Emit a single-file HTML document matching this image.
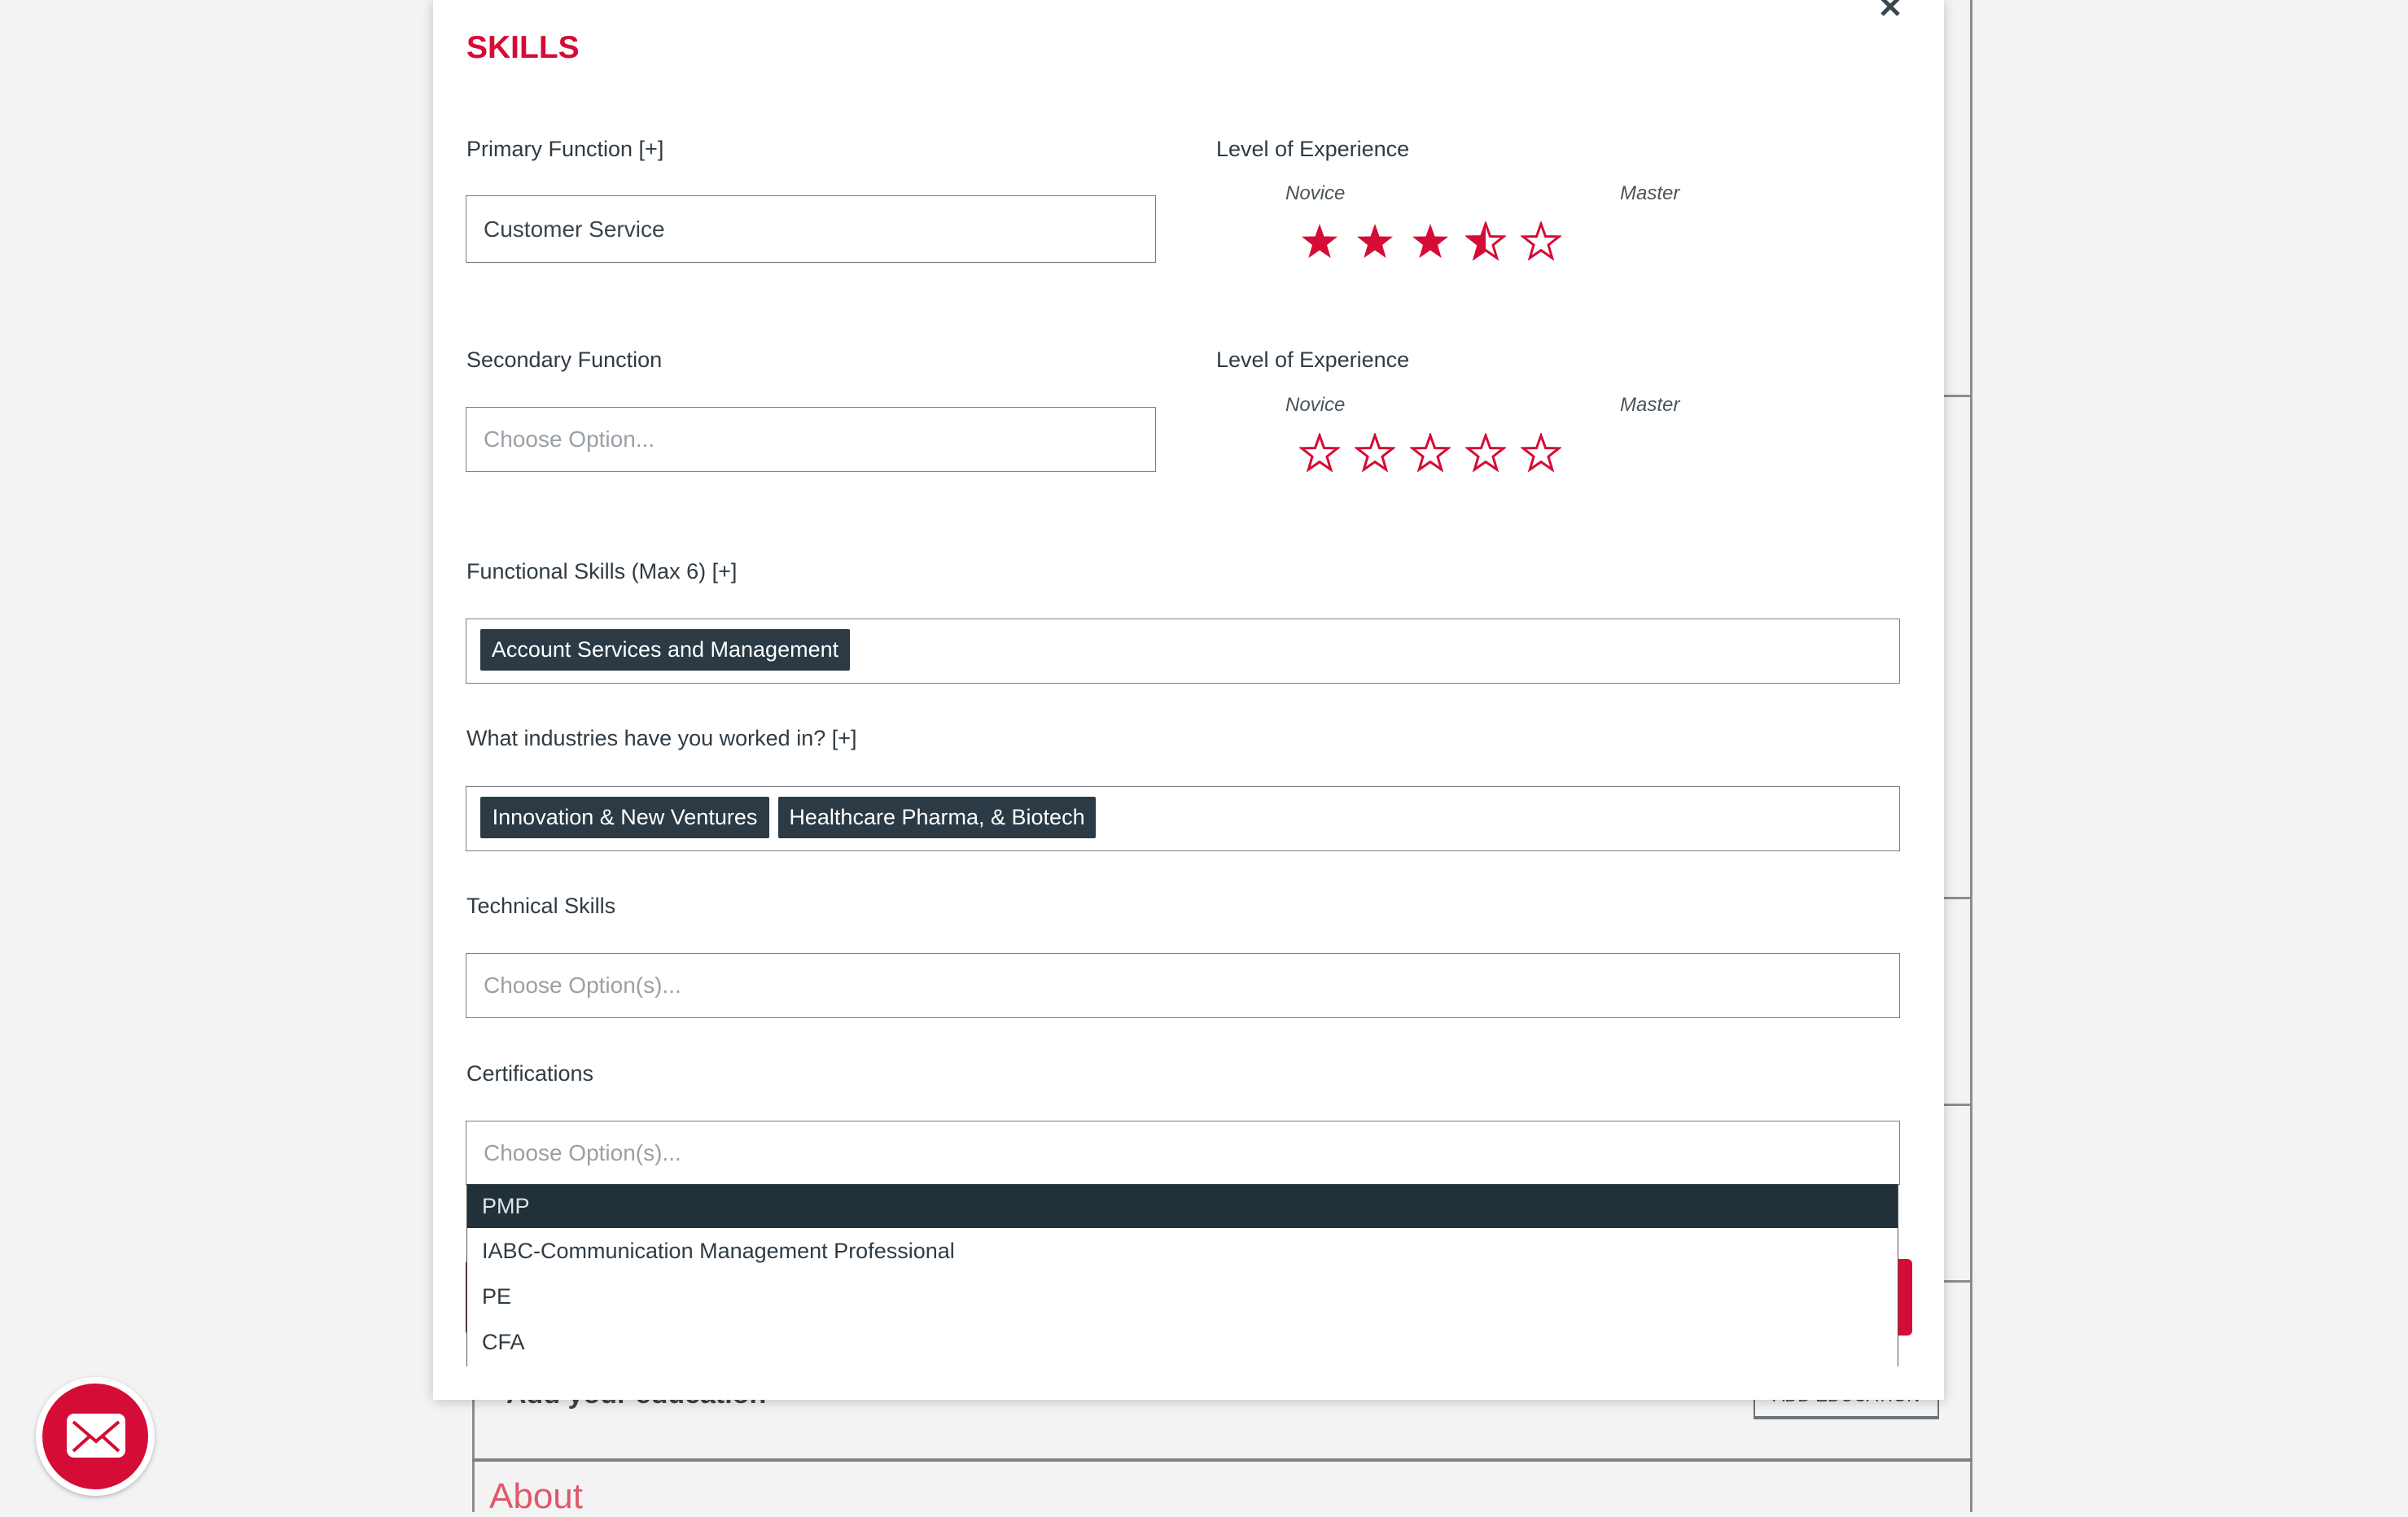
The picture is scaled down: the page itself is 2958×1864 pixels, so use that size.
<!DOCTYPE html>
<html><head><meta charset="utf-8"><style>
*{box-sizing:border-box;margin:0;padding:0}
body{width:2958px;height:1858px;background:#f3f3f3;position:relative;overflow:hidden;font-family:"Liberation Sans",sans-serif;color:#2f3b44}
.a{position:absolute}
.lbl{position:absolute;font-size:27px;color:#2f3b44;line-height:32px}
.inp{position:absolute;border:1.5px solid #7a7f84;background:#fff;font-size:28px;padding-left:21px;display:flex;align-items:center;color:#3a454d}
.ph{color:#9aa0a5}
.tag{position:absolute;background:#2b3a44;color:#fff;font-size:27px;display:flex;align-items:center;justify-content:center;border-radius:2px}
.it{position:absolute;font-style:italic;font-size:24px;color:#4a545b}
.star{position:absolute;width:50px;height:50px}
.row{position:absolute;left:0;right:0;height:56px;display:flex;align-items:center;padding-left:18px;font-size:27px;color:#2f3b44}
</style></head><body>
<div class="a" style="left:2420px;top:0;width:3px;height:1858px;background:#8a8d90"></div>
<div class="a" style="left:580px;top:1700px;width:3px;height:158px;background:#8a8d90"></div>
<div class="a" style="left:2388px;top:485px;width:34px;height:3px;background:#8a8d90"></div>
<div class="a" style="left:2388px;top:1102px;width:34px;height:3px;background:#8a8d90"></div>
<div class="a" style="left:2388px;top:1356px;width:34px;height:3px;background:#8a8d90"></div>
<div class="a" style="left:2388px;top:1573px;width:34px;height:3px;background:#8a8d90"></div>
<div class="a" style="left:580px;top:1792px;width:1843px;height:4px;background:#7e8184"></div>
<div class="a" style="left:622px;top:1694px;font-size:34px;font-weight:bold;color:#3a454d">Add your education</div>
<div class="a" style="left:2154px;top:1688px;width:228px;height:56px;border:2px solid #6c757b;border-bottom-width:4px;font-size:22px;color:#3a454d;display:flex;align-items:center;justify-content:center">ADD EDUCATION</div>
<div class="a" style="left:601px;top:1814px;font-size:44px;color:#e0586c">About</div>
<div class="a" style="left:44px;top:1692px;width:146px;height:146px;border-radius:50%;background:#fff;box-shadow:0 2px 6px rgba(0,0,0,.25)"></div>
<div class="a" style="left:52px;top:1700px;width:130px;height:130px;border-radius:50%;background:#d50c36"></div>
<svg class="a" style="left:80px;top:1735px" width="76" height="58" viewBox="0 0 76 58"><rect x="2" y="2" width="72" height="54" rx="9" fill="#fff"/><path d="M10 12 L38 36 L66 12 M10 48 L30 30 M66 48 L46 30" stroke="#d50c36" stroke-width="4" fill="none"/></svg>
<div class="a" style="left:532px;top:0;width:1856px;height:1720px;background:#fff;box-shadow:0 2px 14px rgba(0,0,0,.2)"></div>
<div class="a" style="left:573px;top:37px;font-size:39px;font-weight:bold;color:#d50c36">SKILLS</div>
<svg class="a" style="left:2308px;top:-6px" width="28" height="28" viewBox="0 0 28 28"><path d="M4 4L24 24M24 4L4 24" stroke="#3a454d" stroke-width="5"/></svg>

<div class="lbl" style="left:573px;top:167px">Primary Function [+]</div>
<div class="inp" style="left:572px;top:240px;width:848px;height:83px">Customer Service</div>
<div class="lbl" style="left:1494px;top:167px">Level of Experience</div>
<div class="it" style="left:1579px;top:224px">Novice</div>
<div class="it" style="left:1990px;top:224px">Master</div>

<div class="lbl" style="left:573px;top:426px">Secondary Function</div>
<div class="inp ph" style="left:572px;top:500px;width:848px;height:80px">Choose Option...</div>
<div class="lbl" style="left:1494px;top:426px">Level of Experience</div>
<div class="it" style="left:1579px;top:484px">Novice</div>
<div class="it" style="left:1990px;top:484px">Master</div>

<svg width="0" height="0" style="position:absolute"><defs>
<path id="s" d="M25 3 L30.5 18.5 L47 18.8 L34 29 L38.7 45 L25 35.5 L11.3 45 L16 29 L3 18.8 L19.5 18.5 Z"/>
<clipPath id="h"><rect x="0" y="0" width="25" height="50"/></clipPath>
</defs></svg>
<svg class="star" style="left:1596px;top:272px"><use href="#s" fill="#d50c36"/></svg>
<svg class="star" style="left:1664px;top:272px"><use href="#s" fill="#d50c36"/></svg>
<svg class="star" style="left:1732px;top:272px"><use href="#s" fill="#d50c36"/></svg>
<svg class="star" style="left:1800px;top:272px"><use href="#s" fill="none" stroke="#d50c36" stroke-width="3"/><use href="#s" fill="#d50c36" clip-path="url(#h)"/></svg>
<svg class="star" style="left:1868px;top:272px"><use href="#s" fill="none" stroke="#d50c36" stroke-width="3"/></svg>

<svg class="star" style="left:1596px;top:532px"><use href="#s" fill="none" stroke="#d50c36" stroke-width="3"/></svg>
<svg class="star" style="left:1664px;top:532px"><use href="#s" fill="none" stroke="#d50c36" stroke-width="3"/></svg>
<svg class="star" style="left:1732px;top:532px"><use href="#s" fill="none" stroke="#d50c36" stroke-width="3"/></svg>
<svg class="star" style="left:1800px;top:532px"><use href="#s" fill="none" stroke="#d50c36" stroke-width="3"/></svg>
<svg class="star" style="left:1868px;top:532px"><use href="#s" fill="none" stroke="#d50c36" stroke-width="3"/></svg>

<div class="lbl" style="left:573px;top:686px">Functional Skills (Max 6) [+]</div>
<div class="inp" style="left:572px;top:760px;width:1762px;height:80px"></div>
<div class="tag" style="left:590px;top:773px;width:454px;height:51px">Account Services and Management</div>

<div class="lbl" style="left:573px;top:891px">What industries have you worked in? [+]</div>
<div class="inp" style="left:572px;top:966px;width:1762px;height:80px"></div>
<div class="tag" style="left:590px;top:979px;width:355px;height:51px">Innovation &amp; New Ventures</div>
<div class="tag" style="left:956px;top:979px;width:390px;height:51px">Healthcare Pharma, &amp; Biotech</div>

<div class="lbl" style="left:573px;top:1097px">Technical Skills</div>
<div class="inp ph" style="left:572px;top:1171px;width:1762px;height:80px">Choose Option(s)...</div>

<div class="lbl" style="left:573px;top:1303px">Certifications</div>
<div class="a" style="left:572px;top:1547px;width:1777px;height:94px;background:#d50c36;border-radius:6px;border-left:4px solid #6b1020"></div>
<div class="inp ph" style="left:572px;top:1377px;width:1762px;height:79px">Choose Option(s)...</div>
<div class="a" style="left:573px;top:1455px;width:1759px;height:224px;background:#fff;border-left:1.5px solid #555;border-right:1.5px solid #555">
<div class="row" style="top:0;height:54px;background:#22303a;color:#dfe3e6">PMP</div>
<div class="row" style="top:54px">IABC-Communication Management Professional</div>
<div class="row" style="top:110px">PE</div>
<div class="row" style="top:166px">CFA</div>
</div>
</body></html>
